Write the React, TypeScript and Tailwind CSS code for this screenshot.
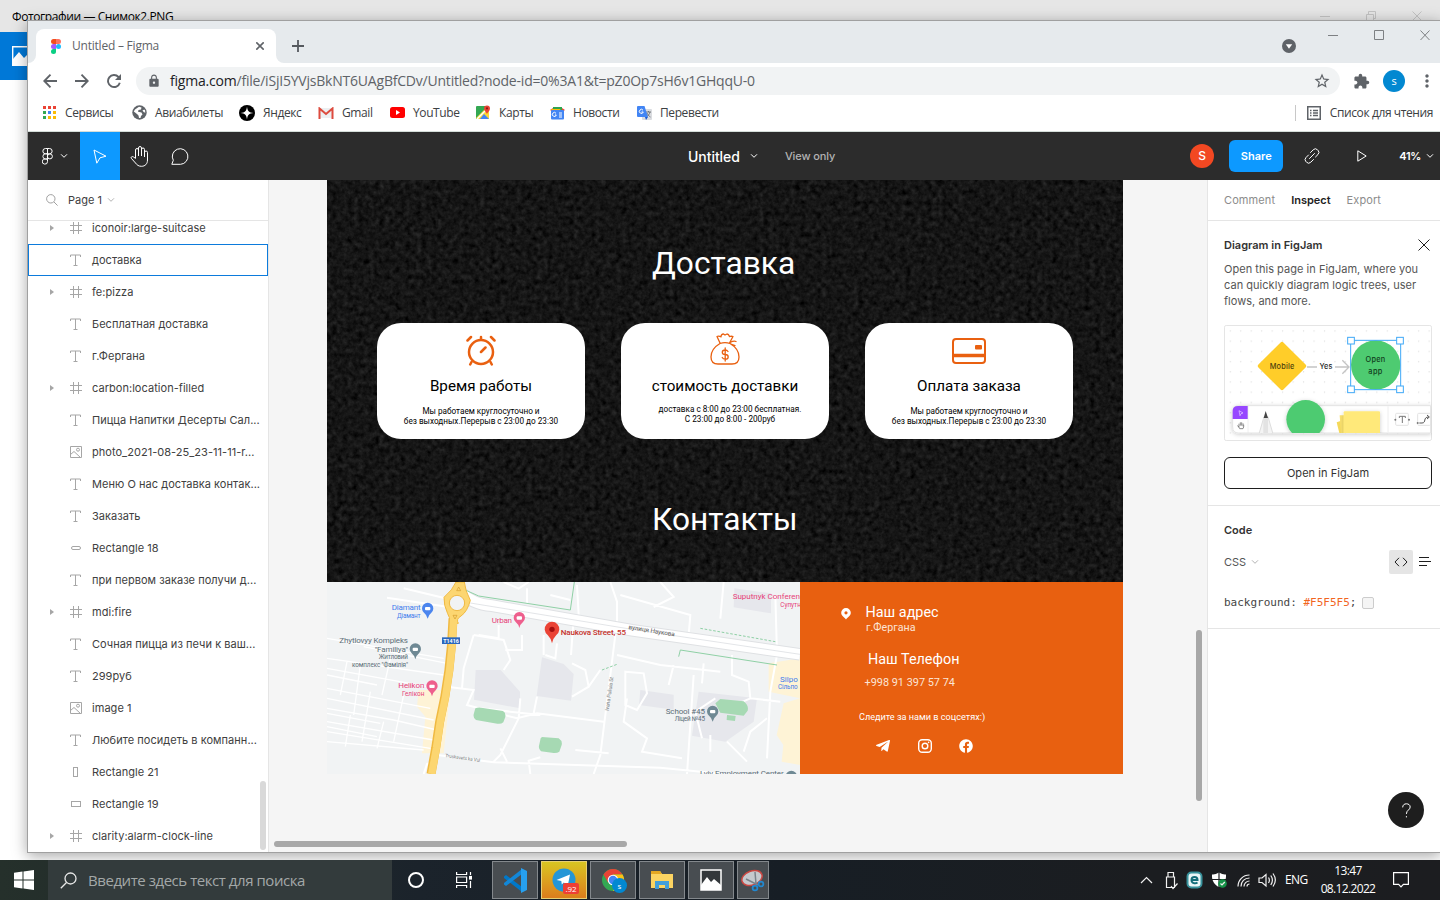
import React from "react";
import { MdLock, MdStarBorder, MdExtension, MdMoreVert } from "react-icons/md";
import { FaTelegramPlane, FaFacebook } from "react-icons/fa";

type Kind = "frame" | "text" | "image" | "pill" | "tall" | "rect";

const layers: { kind: Kind; name: string; selected?: boolean }[] = [
  { kind: "frame", name: "iconoir:large-suitcase" },
  { kind: "text", name: "доставка", selected: true },
  { kind: "frame", name: "fe:pizza" },
  { kind: "text", name: "Бесплатная доставка" },
  { kind: "text", name: "г.Фергана" },
  { kind: "frame", name: "carbon:location-filled" },
  { kind: "text", name: "Пицца Напитки Десерты Сал..." },
  { kind: "image", name: "photo_2021-08-25_23-11-11-r..." },
  { kind: "text", name: "Меню О нас доставка контак..." },
  { kind: "text", name: "Заказать" },
  { kind: "pill", name: "Rectangle 18" },
  { kind: "text", name: "при первом заказе получи д..." },
  { kind: "frame", name: "mdi:fire" },
  { kind: "text", name: "Сочная пицца из печи к ваш..." },
  { kind: "text", name: "299руб" },
  { kind: "image", name: "image 1" },
  { kind: "text", name: "Любите посидеть в компанн..." },
  { kind: "tall", name: "Rectangle 21" },
  { kind: "rect", name: "Rectangle 19" },
  { kind: "frame", name: "clarity:alarm-clock-line" },
];

function LayerIcon({ kind }: { kind: Kind }) {
  return (
    <svg width="12" height="12" viewBox="0 0 12 12" fill="none" stroke="#a6a6a6" className="shrink-0">
      {kind === "frame" && <path d="M3.500 0v12M8.500 0v12M0 3.500h12M0 8.500h12" />}
      {kind === "text" && <path d="M.5 3V1h10v2M5.500 1v10.500M3.500 11.500h4" />}
      {kind === "image" && (
        <>
          <path d="M.5.5h11v11H.5zM.5 8.500l3.500-3 6.500 6" />
          <circle cx="8" cy="3.700" r="1.500" />
        </>
      )}
      {kind === "pill" && <rect x="1.500" y="4.500" width="9" height="3" rx="1.500" />}
      {kind === "tall" && <rect x="3.500" y="1.500" width="4" height="9" />}
      {kind === "rect" && <rect x="1.500" y="3.500" width="9" height="5" />}
    </svg>
  );
}

function Chevron({ className }: { className: string }) {
  return (
    <svg width="8" height="6" viewBox="0 0 8 6" fill="none" stroke="currentColor" className={className}>
      <path d="M1 1.300l3 3 3-3" />
    </svg>
  );
}

function TabStrip() {
  return (
    <div className="flex h-[42px] shrink-0 bg-[#e6eaed]">
      <div className="flex w-2 items-end bg-white">
        <div className="h-full w-2 rounded-br-lg bg-[#e6eaed]" />
      </div>
      <div className="w-60 bg-[#e6eaed] pt-2">
        <div className="flex h-[34px] items-center rounded-t-lg bg-white pr-[12px] pl-[15px]">
          <svg width="10" height="15" viewBox="0 0 10 15">
            <path d="M2.500 0H5v5H2.500a2.500 2.500 0 010-5z" fill="#f24e1e" />
            <path d="M5 0h2.500a2.500 2.500 0 010 5H5z" fill="#ff7262" />
            <path d="M2.500 5H5v5H2.500a2.500 2.500 0 010-5z" fill="#a259ff" />
            <circle cx="7.500" cy="7.500" r="2.500" fill="#1abcfe" />
            <path d="M2.500 10H5v2.500A2.500 2.500 0 112.500 10z" fill="#0acf83" />
          </svg>
          <span className="ml-[11px] grow text-[12px] tracking-[-0.22px] text-[#5f6368]">Untitled – Figma</span>
          <svg width="8" height="8" viewBox="0 0 8 8" stroke="#5f6368" strokeWidth="1.600">
            <path d="M.3.300l7.400 7.400M7.700.300L.3 7.700" />
          </svg>
        </div>
      </div>
      <div className="flex w-2 bg-white">
        <div className="h-full w-2 rounded-bl-lg bg-[#e6eaed]" />
      </div>
      <div className="flex grow items-center pt-2 pl-[8px]">
        <svg width="12" height="12" viewBox="0 0 12 12" stroke="#55595e" strokeWidth="1.800">
          <path d="M6 0v12M0 6h12" />
        </svg>
      </div>
      <svg width="14" height="14" viewBox="0 0 14 14" className="mt-[18px] mr-[24px]">
        <circle cx="7" cy="7" r="7" fill="#5f6368" />
        <path d="M3.800 5.200h6.400L7 9.800z" fill="#fff" />
      </svg>
      <svg width="120" height="28" viewBox="0 0 120 28" fill="none" stroke="#7d8083">
        <path d="M8 14.500h10M54.500 9.500h9v9h-9zM100.500 9.500l9 9.500M109.500 9.500l-9 9.500" />
      </svg>
    </div>
  );
}

function AddressBar() {
  return (
    <div className="flex h-9 shrink-0 items-center bg-white pl-[15px] text-[#5f6368]">
      <svg width="14" height="14" viewBox="0 0 14 14" fill="none" stroke="currentColor" strokeWidth="1.900">
        <path d="M14 7H1.500M7.500.700L1.300 7l6.200 6.300" />
      </svg>
      <svg width="14" height="14" viewBox="0 0 14 14" fill="none" stroke="currentColor" strokeWidth="1.900" className="ml-[18px]">
        <path d="M0 7h12.500M6.500.700L12.700 7l-6.200 6.300" />
      </svg>
      <svg width="14" height="14" viewBox="0 0 14 14" fill="none" stroke="currentColor" strokeWidth="1.900" className="ml-[18px]">
        <path d="M12.800 8.700A6 6 0 1111.500 3L12.500 4.200" />
        <path d="M14 0v6H8z" fill="currentColor" stroke="none" />
      </svg>
      <div className="ml-[15px] flex h-7 w-[1204px] shrink-0 items-center rounded-full bg-[#f1f3f4] pr-[9px] pl-[11px]">
        <MdLock size={14} />
        <span className="ml-[9px] grow pb-px text-[14px] tracking-[-0.21px] whitespace-nowrap">
          <span className="text-[#202124]">figma.com</span>/file/iSjI5YVjsBkNT6UAgBfCDv/Untitled?node-id=0%3A1&amp;t=pZ0Op7sH6v1GHqqU-0
        </span>
        <MdStarBorder size={18} />
      </div>
      <MdExtension size={17} className="ml-[13px] shrink-0" />
      <div className="ml-[13px] flex size-[22px] shrink-0 items-center justify-center rounded-full bg-[#0288d1] text-[11px] text-white">s</div>
      <MdMoreVert size={20} className="ml-3 shrink-0" />
    </div>
  );
}

function Bookmark({ width, icon, label }: { width: string; icon: React.ReactNode; label: string }) {
  return (
    <div className={"flex shrink-0 items-center gap-2 whitespace-nowrap " + width}>
      <span className="flex w-4 shrink-0 justify-center">{icon}</span>
      <span>{label}</span>
    </div>
  );
}

function Bookmarks() {
  const dots = ["#ea4335", "#ea4335", "#ea4335", "#34a853", "#4285f4", "#fbbc04", "#34a853", "#fbbc04", "#fbbc04"];
  return (
    <div className="flex h-[33px] shrink-0 items-center border-b border-[#d4ddd9] bg-white pb-[5px] pl-[13px] text-[12px] tracking-[-0.4px] text-[#3c4043]">
      <Bookmark
        width="w-[90px]"
        label="Сервисы"
        icon={
          <svg width="13" height="13" viewBox="0 0 13 13">
            {dots.map((c, i) => (
              <rect key={i} x={(i % 3) * 5} y={Math.floor(i / 3) * 5} width="3" height="3" fill={c} />
            ))}
          </svg>
        }
      />
      <Bookmark
        width="w-[108px]"
        label="Авиабилеты"
        icon={
          <svg width="15" height="15" viewBox="0 0 15 15">
            <circle cx="7.500" cy="7.500" r="7.200" fill="#5f6368" />
            <path d="M7 1.800l2.500.8-.5 1.800-2.500.6-.5 1.700 3.500.8 1 2-1.500 1.500-.5 2H7l-.5-2.500L5 9 1.800 6.500 3 4.500zM10.500 5l2.500-.3.300 3-1.800-.7z" fill="#fff" />
          </svg>
        }
      />
      <Bookmark
        width="w-[79px]"
        label="Яндекс"
        icon={
          <svg width="16" height="16" viewBox="0 0 16 16">
            <circle cx="8" cy="8" r="8" />
            <path d="M8 1.500c.4 4.500 2 6.100 6.500 6.500-4.500.4-6.100 2-6.500 6.500-.4-4.500-2-6.100-6.500-6.500C6 7.600 7.600 6 8 1.500z" fill="#fff" />
          </svg>
        }
      />
      <Bookmark
        width="w-[71px]"
        label="Gmail"
        icon={
          <svg width="16" height="12" viewBox="0 0 16 12" fill="none">
            <path d="M1 1h14v10H1z" fill="#eceff1" />
            <path d="M1.500 12V1.500L8 7l6.500-5.500V12" stroke="#dd4b3e" strokeWidth="2" />
          </svg>
        }
      />
      <Bookmark
        width="w-[86px]"
        label="YouTube"
        icon={
          <svg width="15" height="11" viewBox="0 0 15 11" className="shrink-0">
            <rect width="15" height="11" rx="2.500" fill="red" />
            <path d="M6 3l4 2.500L6 8z" fill="#fff" />
          </svg>
        }
      />
      <Bookmark
        width="w-[74px]"
        label="Карты"
        icon={
          <svg width="16" height="15" viewBox="0 0 16 15">
            <rect x="1" y="1" width="13" height="13" rx="1" fill="#34a853" />
            <path d="M1 13L12 2l2 2v10H2z" fill="#fdd835" />
            <path d="M5 14l4-5 5 5z" fill="#4285f4" />
            <path d="M2 14L13 3" stroke="#fff" strokeWidth="1.500" />
            <path d="M12 9C11 6.500 9 6 9 3.500a3 3 0 016 0C15 6 13 6.500 12 9z" fill="#ea4335" />
            <circle cx="12" cy="3.400" r="1.100" fill="#8e1b12" />
          </svg>
        }
      />
      <Bookmark
        width="w-[87px]"
        label="Новости"
        icon={
          <svg width="15" height="14" viewBox="0 0 15 14">
            <path d="M0 4l3-2v4zM15 4l-3-2v4z" fill="#ea4335" />
            <path d="M3 1h9v4H3z" fill="#2ea44f" />
            <path d="M1 3h9l1 2H2z" fill="#fbbc04" />
            <rect x="1" y="4" width="13" height="9.500" rx="1" fill="#4285f4" />
            <path d="M6 7.300a2 2 0 10.300 1.700H5M9 7h3M9 9h3M9 11h3" fill="none" stroke="#fff" />
          </svg>
        }
      />
      <Bookmark
        width="grow"
        label="Перевести"
        icon={
          <svg width="15" height="14" viewBox="0 0 15 14">
            <rect x="5" y="3" width="10" height="11" rx="1" fill="#dadce0" />
            <path d="M9 6h5M11.500 5v1M13 6c-.5 2-2 4-3.500 5M10 7c.8 2 2 3 3.500 4" stroke="#5f6368" fill="none" strokeWidth=".8" />
            <path d="M1 0h6.500L11 11H1a1 1 0 01-1-1V1a1 1 0 011-1z" fill="#4285f4" />
            <path d="M8 11h3l-2 3z" fill="#1a5ad0" />
            <path d="M6 4.200a2 2 0 10.300 1.800H4.500" fill="none" stroke="#fff" />
          </svg>
        }
      />
      <div className="mr-[11px] h-4 w-px bg-[#c8c8c8]" />
      <svg width="14" height="14" viewBox="0 0 14 14" fill="none" stroke="#5f6368">
        <rect x=".75" y=".75" width="12.500" height="12.500" strokeWidth="1.500" />
        <path d="M3 4.500h1.500M6 4.500h5M3 7h1.500M6 7h5M3 9.500h1.500M6 9.500h5" strokeWidth="1.300" />
      </svg>
      <span className="mr-[7px] ml-[9px] whitespace-nowrap">Список для чтения</span>
    </div>
  );
}

function FigmaToolbar() {
  return (
    <div className="flex h-12 shrink-0 items-center bg-[#2c2c2c] font-['Inter',sans-serif] text-white">
      <div className="flex w-[52px] items-center pl-[14px]">
        <svg width="11" height="17" viewBox="0 0 11 17" fill="none" stroke="#fff">
          <path d="M5.500.5h-2a2.600 2.600 0 000 5.300h2zM5.500.5h2a2.600 2.600 0 010 5.300h-2zM5.500 5.800h-2a2.600 2.600 0 000 5.200h2zM5.500 11h-2a2.600 2.600 0 102 2.600z" />
          <circle cx="7.900" cy="8.400" r="2.500" />
        </svg>
        <Chevron className="ml-[7px] text-white" />
      </div>
      <div className="flex h-12 w-10 items-center justify-center bg-[#0d99ff]">
        <svg width="14" height="15" viewBox="0 0 14 15" fill="none" stroke="#fff" strokeLinejoin="round">
          <path d="M1 1l12 6.200-6 1.600-3.200 5.400z" />
        </svg>
      </div>
      <div className="flex w-[39px] items-center justify-center">
        <svg width="19" height="21" viewBox="0 0 19 21" fill="none" stroke="#fff" strokeLinecap="round" strokeLinejoin="round">
          <path d="M5.500 12V4a1.500 1.500 0 013 0v6V2a1.500 1.500 0 013 0v8-6.500a1.500 1.500 0 013 0V11 6.500a1.500 1.500 0 013 0V14c0 4-2.500 6.300-6 6.300-3 0-4.500-1.300-6-3.300l-4.200-4.700c-.8-1 .8-2.500 2-1.500z" />
        </svg>
      </div>
      <div className="flex w-[41px] items-center justify-center">
        <svg width="18" height="17" viewBox="0 0 18 17" fill="none" stroke="#fff" strokeLinejoin="round">
          <path d="M.8 16.300l1.500-4A7.800 7.800 0 119.500 16.300z" />
        </svg>
      </div>
      <div className="flex grow items-center pl-[488px]">
        <span className="text-[14px] font-medium tracking-[-0.05px]">Untitled</span>
        <Chevron className="ml-[10px] text-white" />
        <span className="ml-[27px] text-[11px] font-medium tracking-[-0.1px] text-[#b3b3b3]">View only</span>
      </div>
      <div className="flex size-6 items-center justify-center rounded-full bg-[#f24822] text-[12px] font-medium">S</div>
      <div className="ml-[15px] flex h-8 w-[54px] items-center justify-center rounded-md bg-[#0d99ff] text-[11px] font-semibold">Share</div>
      <svg width="16" height="16" viewBox="0 0 16 16" fill="none" stroke="#fff" strokeLinecap="round" className="ml-[21px]">
        <path d="M6.500 4.500l2.700-2.700a3 3 0 014.300 0l.5.500a3 3 0 010 4.200L11.500 9M9.500 11.500l-2.700 2.700a3 3 0 01-4.300 0L2 13.700a3 3 0 010-4.200L4.500 7M5.500 10.500l5-5" />
      </svg>
      <svg width="10" height="12" viewBox="0 0 10 12" fill="none" stroke="#fff" strokeLinejoin="round" className="ml-[37px]">
        <path d="M.8.800l8.400 5.200-8.400 5.200z" />
      </svg>
      <span className="ml-[32px] text-[11px] font-semibold tracking-[-0.3px]">41%</span>
      <Chevron className="mr-[6px] ml-[5px] text-white" />
    </div>
  );
}

function LayersPanel() {
  return (
    <div className="relative flex w-[241px] shrink-0 flex-col border-r border-[#e5e5e5] bg-white font-['Inter',sans-serif] text-[11px] text-[#404040]">
      <div className="flex h-[41px] shrink-0 items-center border-b border-[#e5e5e5] pl-[18px]">
        <svg width="12" height="12" viewBox="0 0 12 12" fill="none" stroke="#a0a0a0">
          <circle cx="4.800" cy="4.800" r="4.200" />
          <path d="M8 8l3.600 3.600" />
        </svg>
        <span className="ml-[10px]">Page 1</span>
        <Chevron className="ml-[5px] text-[#b3b3b3]" />
      </div>
      <div className="grow overflow-hidden">
        <div className="-mt-[9px]">
          {layers.map((l) => (
            <div
              key={l.name}
              className={"flex h-8 items-center " + (l.selected ? "shadow-[inset_0_0_0_1px_#0c7bdc]" : "")}
            >
              <span className="flex w-[42px] pl-[22px]">
                {l.kind === "frame" && (
                  <svg width="4" height="6" viewBox="0 0 4 6">
                    <path d="M0 0l4 3-4 3z" fill="#a6a6a6" />
                  </svg>
                )}
              </span>
              <LayerIcon kind={l.kind} />
              <span className="ml-[10px] tracking-[0.04px] whitespace-nowrap">{l.name}</span>
            </div>
          ))}
        </div>
      </div>
      <div className="absolute right-[2px] bottom-[2px] h-[69px] w-[6px] rounded-full bg-[#d9d9d9]" />
    </div>
  );
}

function InfoCard({ icon, title, lines, textClass }: { icon: React.ReactNode; title: string; lines: string[]; textClass: string }) {
  return (
    <div className="flex h-[116px] w-[208px] flex-col items-center rounded-[24px] bg-white text-black">
      <div className="flex h-[53px] items-end justify-center pb-[10px]">{icon}</div>
      <div className="h-5 text-[15.200px] leading-5">{title}</div>
      <div className={"text-center text-[8.200px] leading-[9.600px] " + textClass}>
        {lines.map((l) => (
          <div key={l}>{l}</div>
        ))}
      </div>
    </div>
  );
}

function MapView() {
  return (
    <svg width="473" height="192" viewBox="0 21 1419 576" fill="none" className="shrink-0 font-['Roboto',sans-serif]">
      <rect y="21" width="1419" height="576" fill="#f1f3f4" />
      <g fill="#e6e7ec">
        <path d="M446 285h75l58 65v50l-138-26zM645 247l65 20 30 30-8 80-103-14zM1222 40l110 15v60l-112-18zM1115 350l175 20-10 70-85 60-100-18zM940 345l100 14v45l-104-14z" />
      </g>
      <g fill="#fef3d6">
        <path d="M275 345h95l-20 190h-65l10-110-25-30zM1325 265l94-15v120l-94-20zM1370 385l49-15v200l-55-10 5-50-20-30z" />
      </g>
      <g stroke="#fff" strokeWidth="6">
        <path d="M0 190l350 60M0 250l350 50M0 280l330 60M0 340l310 60M0 370l320 65M0 400l200 35 130 30M0 440l320 55M0 470l310 50M0 500l290 25M0 300l150 30M0 415l160 30M0 455l150 30M110 215l250 50M60 260l-20 100M100 270l-20 150M190 250l-25 110M130 350l-25 150M230 360l-30 140M70 420l-15 95M170 440l-20 80" strokeWidth="4" />
        <path d="M180 68l240 36M230 40l125 30M330 540l170 22 500 16 190 19M290 597l10-30 25-10M360 335l80 10-20 45 150 40 60-15 200 25M580 370l-5 60-55 110-20 20M520 520l20 40M440 180l-30 100-5 60M440 180l90 15 20 60-20 30M515 150v40l-60-10M585 180v45l-50 0M630 365l-10 50M650 240v-60M690 205l-5 45-30-10M735 265l40 20 10 50-50 30M785 335l35-50M530 21l45 20 30-20M600 40v45M670 60l60 15M740 130l-8 110M750 30l5 90 30 20M870 140l-15 120-35 280-20 57M870 240l130 30 180 20M870 140v-60l-20-59M880 60l210 60-5 60M1000 21l40 45-60 30M1190 21l-10 110M1345 60l5 180-20 110-10 200M1100 300l-20 297M1215 240v60l50 20 5 50-70 30M895 290l55 5 10 60-30 50-35-15zM900 370l-10 70 70 50-15 40 120 20M1165 370l-60 40 20 80M1270 370l90 10M1320 430l-50 40-20 60M745 525l100 10M610 597l-5-40 35-10M1040 270l-15 60M1130 265l-5 60M1150 480v50M1200 500l60 60M460 400l180 20" />
      </g>
      <path d="M400 50q35 38 95 42l420 74 504 72" stroke="#dfe1e4" strokeWidth="38" />
      <path d="M400 50q35 38 95 42l420 74 504 72" stroke="#fff" strokeWidth="32" />
      <path d="M430 84l485 79 504 75" stroke="#d5d8dc" strokeWidth="2" />
      <g stroke="#8fd0a5" strokeWidth="3">
        <path d="M415 45l40 18 275 42 12-84M1055 245l5-20 290 45" />
        <path d="M1120 160l225 40M825 285l45-17" strokeDasharray="8 5" />
      </g>
      <path d="M1165 385l15-13 70 7q16 12 12 28l-12 15-70-9zM1200 420l26 3-2 15-25-3zM445 400q8-4 18-2l65 10q9 4 7 18l-6 16q-7 6-18 4l-64-11q-9-5-7-17zM645 486l50 4q12 8 9 20l-7 20q-7 5-17 4l-38-5q-8-7-6-17l5-22z" fill="#a6d9b3" />
      <path d="M378 130q-5 160-40 310l-12 80-14 77" stroke="#f0b941" strokeWidth="27" />
      <path d="M387 21h25q2 25 18 55-9 34-28 47-16 9-8 22h-25q0-20-7-29-12-25-11-49 26-22 36-46z" fill="#fcd671" stroke="#f0b941" strokeWidth="3" />
      <path d="M380 130q-5 160-40 310l-12 80-14 77" stroke="#fcd671" strokeWidth="22" />
      <circle cx="390" cy="84" r="23" fill="#f1f3f4" stroke="#f0b941" strokeWidth="3" />
      <path d="M389 47l6-11 6 11zM378 121l6 11 6-11z" stroke="#d39b2c" strokeWidth="2" />
      <rect x="345" y="187" width="54" height="20" fill="#2b67bd" />
      <text x="372" y="203" fontSize="16" fontWeight="700" fill="#fff" textAnchor="middle">T1416</text>
      {[
        { x: 302, y: 102, c: "#4b85ee" },
        { x: 577, y: 130, c: "#ee5f8d" },
        { x: 265, y: 224, c: "#6f8994" },
        { x: 315, y: 335, c: "#ee5f8d" },
        { x: 1157, y: 411, c: "#6f8994" },
        { x: 1393, y: 606, c: "#6f8994" },
      ].map((p) => (
        <g key={p.x}>
          <path d={`M${p.x} ${p.y + 29}q-3-12-11-18a17 17 0 1122 0q-8 6-11 18z`} fill={p.c} />
          <rect x={p.x - 8} y={p.y - 6} width="16" height="10" rx="3" fill="#fff" />
        </g>
      ))}
      <path d="M675 205q-2-14-13-25a22 22 0 1126 0q-11 11-13 25z" fill="#ea4335" />
      <circle cx="675" cy="163" r="8" fill="#a50e0e" />
      <g fontSize="24" fontWeight="400" stroke="none">
        <text x="194" y="106" fill="#3f7cec" textLength="87">Diamant</text>
        <text x="210" y="129" fill="#3f7cec" fontSize="19" textLength="71">Діамант</text>
        <text x="494" y="143" fill="#e63f78" textLength="61">Urban</text>
        <text x="701" y="181" fill="#c5312b" fontWeight="500" textLength="196">Naukova Street, 55</text>
        <text x="1217" y="73" fill="#e63f78">Suputnyk Conference</text>
        <text x="1360" y="96" fill="#e63f78" fontSize="19">Супутник</text>
        <g fill="#5b6d77">
          <text x="37" y="204" textLength="206">Zhytlovyy Kompleks</text>
          <text x="143" y="231" textLength="100">"Familiya"</text>
          <text x="155" y="252" fontSize="19" textLength="88">Житловий</text>
          <text x="75" y="275" fontSize="19" textLength="168">комплекс "Фамілія"</text>
          <text x="1016" y="417" textLength="118">School #45</text>
          <text x="1043" y="439" fontSize="19" textLength="91">Ліцей №45</text>
          <text x="1119" y="602" textLength="251">Lviv Employment Center</text>
        </g>
        <text x="214" y="340" fill="#e63f78" textLength="78">Helikon</text>
        <text x="225" y="362" fill="#e63f78" fontSize="19" textLength="67">Гелікон</text>
        <text x="1359" y="320" fill="#3f7cec">Silpo</text>
        <text x="1353" y="341" fill="#3f7cec" fontSize="19" textLength="59">Сільпо</text>
        <text x="0" y="0" fill="#555" fontSize="19" textLength="140" transform="translate(904 162) rotate(9)">вулиця Наукова</text>
        <text x="0" y="0" fill="#7a7d80" fontSize="16" textLength="102" transform="translate(845 408) rotate(-82)">Ivana Puliuia St</text>
        <text x="0" y="0" fill="#7a7d80" fontSize="14" textLength="106" transform="translate(354 546) rotate(8)">Truskavets ka Vul</text>
      </g>
    </svg>
  );
}

function Artboard() {
  const hours = ["Мы работаем круглосуточно и", "без выходных.Перерыв с 23:00 до 23:30"];
  return (
    <div className="w-[796px] font-['Roboto',sans-serif]">
      <div className="relative h-[402px] overflow-hidden bg-[#141414]">
        <svg width="796" height="402" className="absolute inset-0">
          <filter id="grain" x="0" y="0" width="100%" height="100%" colorInterpolationFilters="sRGB">
            <feTurbulence type="fractalNoise" baseFrequency="0.19" numOctaves="3" seed="7" />
            <feColorMatrix values="0.14 0.14 0 0 -0.057  0.14 0.14 0 0 -0.057  0.14 0.14 0 0 -0.057  0 0 0 0 1" />
          </filter>
          <rect width="796" height="402" filter="url(#grain)" />
        </svg>
        <div className="relative flex flex-col text-white">
          <div className="mt-[64px] pl-[325px] text-[31.700px] leading-10">Доставка</div>
          <div className="mt-[39px] flex gap-9 pl-[50px]">
            <InfoCard
              title="Время работы"
              lines={hours}
              textClass="mt-[11px]"
              icon={
                <svg width="30" height="31" viewBox="0 0 30 31" fill="none" stroke="#e96010" strokeWidth="2.500" strokeLinecap="round">
                  <circle cx="15" cy="17" r="12" />
                  <path d="M15 17l4.500-4.500M15 2v2.500M1.500 5.500L5 2M28.500 5.500L25 2M5.500 27l-1.300 2.500M24.500 27l1.300 2.500" />
                </svg>
              }
            />
            <InfoCard
              title="стоимость доставки"
              lines={["доставка с 8:00 до 23:00 бесплатная.", "С 23:00 до 8:00 - 200руб"]}
              textClass="mt-[9px] pl-[10px]"
              icon={
                <svg width="30" height="33" viewBox="0 0 30 33" fill="none" stroke="#e96010" strokeWidth="1.300" strokeLinecap="round" strokeLinejoin="round" className="mb-px">
                  <path d="M10 11.500C4 15 1 20 1 25c0 5 3 7 7 7h14c4 0 7-2 7-7 0-5-3-10-9-13.500-3-1-7-1-10 0zM10 11L7 4.500c1.500-.8 2.500 0 4 .3C11 3 12 2 13.500 2l1.500 1 2-1c1.500 0 2 1 2.500 2.500 1.500-.2 2-.5 3.500 0L19.500 11M20 10.500c3-1.500 4-2 6-1M21 12l4 1.500" />
                  <path d="M18 19.500c-.6-1-1.500-1.500-2.800-1.500-3.900 0-3.900 4.300 0 4.500 4 .2 4 4.700 0 4.700-1.400 0-2.400-.6-3-1.700M15.200 16v13" />
                </svg>
              }
            />
            <InfoCard
              title="Оплата заказа"
              lines={hours}
              textClass="mt-[11px]"
              icon={
                <svg width="34" height="28" viewBox="0 0 34 28" fill="none" stroke="#e96010" strokeWidth="2">
                  <rect x="1" y="1" width="32" height="24" rx="3" />
                  <path d="M1 17.500h32" strokeWidth="3.500" />
                  <rect x="23" y="7" width="7" height="4.500" rx="1" fill="#e96010" stroke="none" />
                </svg>
              }
            />
          </div>
          <div className="mt-[61px] pl-[325px] text-[31.700px] leading-10">Контакты</div>
        </div>
      </div>
      <div className="flex h-48">
        <MapView />
        <div className="flex w-[323px] flex-col bg-[#e86010] text-white">
          <div className="mt-5 flex h-5 items-center pl-[41px]">
            <svg width="10" height="12" viewBox="0 0 10 12" className="mt-1">
              <path d="M5 0a4.800 4.800 0 00-4.800 4.800C.2 8 3 9 5 11.500 7 9 9.800 8 9.800 4.800A4.800 4.800 0 005 0zm0 3.200a1.600 1.600 0 110 3.200 1.600 1.600 0 010-3.200z" fill="#fff" />
            </svg>
            <span className="ml-[14.500px] pt-px text-[14.400px] leading-5">Наш адрес</span>
          </div>
          <div className="h-3 pl-[66px] text-[10.700px] leading-3 text-[#fbe4d6]">г.Фергана</div>
          <div className="mt-[16px] pl-[68px] text-[14.400px] leading-5">Наш Телефон</div>
          <div className="mt-[5px] pl-[64.500px] text-[10.900px] leading-4 text-[#fbe4d6]">+998 91 397 57 74</div>
          <div className="mt-[20px] pl-[59px] text-[9.150px] leading-3">Следите за нами в соцсетях:)</div>
          <div className="mt-[15px] flex items-center pl-[75px]">
            <FaTelegramPlane size={16} />
            <svg width="14" height="14" viewBox="0 0 14 14" fill="none" stroke="#fff" strokeWidth="1.400" className="ml-[27px]">
              <rect x=".7" y=".7" width="12.600" height="12.600" rx="3.500" />
              <circle cx="7" cy="7" r="2.800" />
              <circle cx="10.600" cy="3.400" r=".8" fill="#fff" stroke="none" />
            </svg>
            <FaFacebook size={14} className="ml-[27px]" />
          </div>
        </div>
      </div>
    </div>
  );
}

function Canvas() {
  return (
    <div className="relative w-[938px] shrink-0 bg-[#f5f5f5] pl-[58px]">
      <Artboard />
      <div className="absolute top-[450px] right-[5px] h-[171px] w-[6px] rounded-full bg-[#a8a8a8]" />
      <div className="absolute bottom-[5px] left-[5px] h-[6px] w-[353px] rounded-full bg-[#a8a8a8]" />
    </div>
  );
}

function FigJamPreview() {
  return (
    <svg width="208" height="116" viewBox="72 435 624 348" fill="none" className="mt-4 font-['Inter',sans-serif]">
      <defs>
        <pattern id="dots" x="75" y="437" width="31.400" height="30.600" patternUnits="userSpaceOnUse">
          <circle cx="16" cy="16" r="2" fill="#dedede" />
        </pattern>
        <clipPath id="tray">
          <rect x="75" y="440" width="617" height="319" />
        </clipPath>
        <filter id="soft" x="-20%" y="-20%" width="140%" height="140%">
          <feDropShadow dx="0" dy="3" stdDeviation="6" floodOpacity=".2" />
        </filter>
      </defs>
      <rect x="73.500" y="436.500" width="621" height="345" rx="5" fill="#fff" stroke="#e5e5e5" strokeWidth="3" />
      <rect x="75" y="438" width="618" height="342" fill="url(#dots)" />
      <rect x="193" y="505" width="106" height="106" rx="6" transform="rotate(45 246 558)" fill="#ffcd29" />
      <path d="M321 561h30M405 561h42M427 541l20 20-20 20" stroke="#c4c4c4" strokeWidth="4" />
      <circle cx="527" cy="555" r="74" fill="#4ecb71" />
      <rect x="452" y="481" width="150" height="148" stroke="#3fa8f7" strokeWidth="3" />
      {[[443, 472], [590, 472], [443, 618], [590, 618]].map(([x, y]) => (
        <rect key={`${x}-${y}`} x={x} y={y} width="20" height="20" fill="#fff" stroke="#3fa8f7" strokeWidth="3" />
      ))}
      <g fontSize="22" fontWeight="500" fill="#1e1e1e" textAnchor="middle">
        <text x="246" y="566" textLength="74" fill="#4d3e0c">Mobile</text>
        <text x="378" y="566" textLength="39">Yes</text>
        <text x="526" y="546" textLength="59" fill="#103d1c">Open</text>
        <text x="526" y="581" textLength="42" fill="#103d1c">app</text>
      </g>
      <path d="M98 695q0-18 18-18h576v82H116q-18 0-18-18z" fill="#fff" stroke="#e3e3e3" strokeWidth="3" filter="url(#soft)" />
      <g clipPath="url(#tray)">
        <path d="M98 717v-24q0-15 16-15h30v39z" fill="#9747ff" />
        <path d="M117 692l12 7-6 2-3 6z" stroke="#fff" strokeWidth="1.500" />
        <path d="M144 677v82" stroke="#e8e8e8" strokeWidth="2" />
        <path d="M116 742l-3-6M117 740v-9M121 737v-10M125 737v-10M129 739v-9M115 738l4 8h10q3-4 2-12" stroke="#777" strokeWidth="2.500" />
        <path d="M177 762l15-52h12l15 52z" fill="#f4f4f4" stroke="#ddd" strokeWidth="3" />
        <path d="M190 762v-48h14v48z" fill="#e3e3e3" />
        <path d="M191 714l6-21 7 21z" fill="#444" />
        <circle cx="317" cy="718" r="58" fill="#4ecb71" filter="url(#soft)" />
        <path d="M410 727l30-10 20 50h-40z" fill="#f5d95a" />
        <path d="M419 706h40v60h-36z" fill="#fbe26f" />
        <rect x="431" y="694" width="109" height="80" rx="3" fill="#ffe97a" filter="url(#soft)" />
        <path d="M564 679v78" stroke="#eee" strokeWidth="3" />
        <rect x="587" y="700" width="38" height="36" rx="3" stroke="#e2e2e2" strokeWidth="3" />
        <path d="M598 714v-5h18v5M607 709v20" stroke="#777" strokeWidth="3" />
        <circle cx="586" cy="719" r="3" fill="#777" />
        <circle cx="627" cy="719" r="3" fill="#777" />
        <rect x="653" y="700" width="39" height="36" rx="3" stroke="#e2e2e2" strokeWidth="3" />
        <path d="M658 729h8c14 0 2-18 20-18M681 705l7 6-7 6" stroke="#555" strokeWidth="3" />
        <circle cx="653" cy="729" r="3" fill="#777" />
      </g>
    </svg>
  );
}

function InspectPanel() {
  return (
    <div className="relative flex w-[233px] shrink-0 flex-col border-l border-[#e5e5e5] bg-white font-['Inter',sans-serif] text-[11px] text-[#333]">
      <div className="flex h-[41px] items-center gap-4 border-b border-[#e5e5e5] pl-4 text-[#8c8c8c]">
        <span className="tracking-[0.1px]">Comment</span>
        <span className="font-semibold text-[#1e1e1e]">Inspect</span>
        <span className="tracking-[0.1px]">Export</span>
      </div>
      <div className="h-[285px] border-b border-[#e5e5e5] pt-4 pl-4">
        <div className="flex h-4 w-[208px] items-center justify-between pr-[2px] font-semibold">
          Diagram in FigJam
          <svg width="12" height="12" viewBox="0 0 12 12" stroke="#1e1e1e" strokeWidth="1">
            <path d="M.5.5l11 11M11.500.5l-11 11" />
          </svg>
        </div>
        <p className="mt-2 leading-4 tracking-[0.03px] whitespace-nowrap text-[#555]">
          Open this page in FigJam, where you
          <br />
          can quickly diagram logic trees, user
          <br />
          flows, and more.
        </p>
        <FigJamPreview />
        <div className="mt-4 flex h-8 w-[208px] items-center justify-center rounded-md border border-[#1e1e1e] tracking-[0.06px]">Open in FigJam</div>
      </div>
      <div className="h-[123px] border-b border-[#e5e5e5] pt-4 pl-4">
        <div className="h-4 font-semibold leading-4">Code</div>
        <div className="mt-[12px] flex h-6 items-center text-[#555]">
          CSS
          <Chevron className="mr-auto ml-[5px] text-[#b3b3b3]" />
          <div className="flex size-6 items-center justify-center rounded-[2px] bg-[#e5e5e5]">
            <svg width="14" height="10" viewBox="0 0 14 10" fill="none" stroke="#1e1e1e">
              <path d="M5 .8L1 5l4 4.200M9 .8L13 5 9 9.200" />
            </svg>
          </div>
          <svg width="12" height="10" viewBox="0 0 12 10" stroke="#1e1e1e" className="mr-[9px] ml-[6px]">
            <path d="M0 .5h10M0 4.500h12M0 8.500h8" />
          </svg>
        </div>
        <div className="mt-[21px] flex h-4 items-center font-['DejaVu_Sans_Mono','Liberation_Mono',monospace] text-[11px] whitespace-pre text-[#444]">
          background: <span className="text-[#f2661f]">#F5F5F5</span>;
          <span className="ml-[6px] size-3 rounded-[2px] border border-[#ccc] bg-[#f5f5f5]" />
        </div>
      </div>
      <div className="absolute right-[16px] bottom-[24px] flex size-9 items-center justify-center rounded-full bg-[#1e1e1e]">
        <svg width="9" height="15" viewBox="0 0 9 15" fill="none" stroke="#fff" strokeLinecap="round">
          <path d="M.7 4C.7 2 2.300.8 4.400.8S8.200 2 8.200 4c0 3-3.800 3-3.800 6.500M4.400 13.500v.5" />
        </svg>
      </div>
    </div>
  );
}

function TaskButton({ className, children }: { className: string; children: React.ReactNode }) {
  return <div className={"mr-[3px] flex h-[38px] shrink-0 items-center justify-center border " + className}>{children}</div>;
}

function Taskbar() {
  const gray = "w-[46px] border-[#83888c] bg-[#484d51]";
  return (
    <div className="absolute bottom-0 left-0 flex h-10 w-full items-center bg-[linear-gradient(90deg,#25302b_0,#1b232b_420px,#171e25_780px,#1b1d20_1150px,#1c1d20_100%)] font-['Open_Sans','Noto_Sans',sans-serif] text-white">
      <div className="flex w-12 shrink-0 justify-center">
        <svg width="20" height="20" viewBox="0 0 20 20" fill="#fff">
          <path d="M0 2.800l8.500-1.200v8H0zM9.500 1.400L20 0v9.500H9.500zM0 10.500h8.500v8L0 17.300zM9.500 10.500H20V20L9.500 18.600z" />
        </svg>
      </div>
      <div className="flex h-10 w-[344px] shrink-0 items-center bg-[#333b3c] pl-3">
        <svg width="17" height="17" viewBox="0 0 17 17" fill="none" stroke="#e8e8e8" strokeWidth="1.300">
          <circle cx="10.500" cy="6.500" r="5.500" />
          <path d="M6.500 10.500L.8 16.200" />
        </svg>
        <span className="ml-[11px] text-[15px] tracking-[-0.45px] whitespace-nowrap text-[#a3a8a8]">Введите здесь текст для поиска</span>
      </div>
      <div className="flex w-12 shrink-0 justify-center">
        <div className="size-4 rounded-full border-2 border-white" />
      </div>
      <div className="flex w-[52px] shrink-0 pl-4">
        <svg width="16" height="16" viewBox="0 0 16 16" fill="none" stroke="#fff" strokeWidth="1.200">
          <path d="M.6 0v2.500h10V0M.6 5h10v5.500H.6zM.6 16v-2.500h10V16M14.500 0v3M14.500 9v7" />
          <rect x="13.600" y="4.500" width="2" height="2.500" fill="#fff" />
        </svg>
      </div>
      <TaskButton className={gray}>
        <svg width="25" height="25" viewBox="0 0 25 25">
          <path d="M1 8.500l2-1.500L19 19v5L1 10z" fill="#0078c9" />
          <path d="M1 16.500L3 18 19 6V1L1 15z" fill="#1287d8" />
          <path d="M18 0l6 3v19l-6 3z" fill="#27a0ef" />
        </svg>
      </TaskButton>
      <TaskButton className="relative w-[46px] border-[#e7cf72] bg-linear-to-b from-[#d7c522] to-[#dc7d1c]">
        <svg width="24" height="24" viewBox="0 0 24 24">
          <circle cx="12" cy="12" r="11.500" fill="#2496d6" />
          <path d="M4.500 12L18 6.500l-2.200 11-4-3-2 2-.5-3.500z" fill="#fff" />
        </svg>
        <span className="absolute right-[7px] bottom-[4px] flex h-[11px] w-4 items-center justify-center rounded-[2px] bg-[#ee3f35] text-[8px] leading-none">.92</span>
      </TaskButton>
      <TaskButton className={"relative " + gray}>
        <svg width="24" height="24" viewBox="0 0 24 24">
          <circle cx="12" cy="12" r="11" fill="#33a853" />
          <path d="M2.500 6.500A11 11 0 0121.500 6.500H12L7 14.500z" fill="#e84335" />
          <path d="M12 6.500h9.600A11 11 0 0112 23l5-8.500z" fill="#fbc116" />
          <circle cx="12" cy="12" r="5.300" fill="#fff" />
          <circle cx="12" cy="12" r="4.200" fill="#4285f4" />
        </svg>
        <span className="absolute right-[8px] bottom-[5px] flex size-[15px] items-center justify-center rounded-full bg-[#0288d1] text-[8px] leading-none">s</span>
      </TaskButton>
      <TaskButton className={gray}>
        <svg width="22" height="20" viewBox="0 0 22 20">
          <path d="M0 1h9l2 3h11v14H0z" fill="#fcd462" />
          <path d="M0 1h9l2 3H0z" fill="#e5a823" />
          <path d="M4 19v-8h14v8h-4v-4H8v4z" fill="#429fdb" />
        </svg>
      </TaskButton>
      <TaskButton className={gray}>
        <svg width="22" height="22" viewBox="0 0 22 22">
          <path d="M1 1h20v20H1z" fill="#33383b" stroke="#fff" strokeWidth="1.500" />
          <path d="M1 16l6-8 4 5 3-3 7 6v5H1z" fill="#fff" />
        </svg>
      </TaskButton>
      <TaskButton className="w-8 border-[#83888c] bg-[#484d51]">
        <svg width="24" height="24" viewBox="0 0 24 24" fill="none">
          <ellipse cx="11" cy="10" rx="10.500" ry="7" transform="rotate(-20 11 10)" fill="#c5c9ce" stroke="#ca4742" strokeWidth="1.500" />
          <path d="M5 11l12 6M14 4l1 12" stroke="#7a828a" strokeWidth="1.500" />
          <circle cx="14" cy="20" r="2.400" stroke="#2288d0" strokeWidth="1.800" />
          <circle cx="20" cy="16" r="2.400" stroke="#2288d0" strokeWidth="1.800" />
        </svg>
      </TaskButton>
      <div className="grow" />
      <svg width="152" height="24" viewBox="0 0 152 24" fill="none" stroke="#f1f1f1" strokeWidth="1.200" className="shrink-0">
        <path d="M9 15l5.500-5.500L20 15" />
        <path d="M36 9V4.500h5.500V9M34.500 9h8v10.500h-8zM39 18l2 2.500 4.500-5" />
        <rect x="55.500" y="4.500" width="14" height="15" rx="4" fill="#e9f6f7" stroke="#38929c" strokeWidth="2" />
        <path d="M59.500 12h6c0-4-6-4-6 0 0 3.500 4 4 6 2.500" stroke="#136d79" strokeWidth="2" />
        <path d="M87 4.500q4 2.500 7 2c.5 6-2.500 10.500-7 12.500-4.500-2-7.500-6.500-7-12.500q3 .5 7-2z" fill="#fff" stroke="none" />
        <path d="M87 4v15M80 11.500h14" stroke="#1b1d20" />
        <circle cx="90.500" cy="15.500" r="4.300" fill="#169348" stroke="none" />
        <path d="M88.500 15.500l1.500 1.500 2.800-3" />
        <path d="M106 18.500C106 12 111 7 117.500 7M109 18.500c0-5 3.500-8.500 8.500-8.500M112 18.500c0-3 2.500-5.500 5.500-5.500M115 18.500c0-1.500 1-2.500 2.500-2.500" />
        <path d="M127 10h3l4-3.500v11.500l-4-3.500h-3zM136.500 9.500q1.800 2.700 0 5.500M138.800 7.500q3.200 4.700 0 9.500M141 5.500q4.700 6.500 0 13" />
      </svg>
      <span className="ml-[1px] w-[24px] text-[12px] tracking-[-0.6px]">ENG</span>
      <div className="ml-[11px] flex w-[56px] flex-col items-center text-[12px] leading-[18px] tracking-[-0.65px]">
        <span>13:47</span>
        <span>08.12.2022</span>
      </div>
      <svg width="16" height="16" viewBox="0 0 16 16" fill="none" stroke="#fff" strokeWidth="1.200" className="mr-[31px] ml-[17px]">
        <path d="M.6.600h14.800v11.800h-5L8 14.800l-2.400-2.400h-5z" />
      </svg>
    </div>
  );
}

export default function App() {
  return (
    <div className="relative h-[900px] w-[1440px] overflow-hidden bg-white font-['Open_Sans','Noto_Sans',sans-serif]">
      <div className="flex h-8 items-start justify-between bg-[#e6e6e6] pt-[8px] pl-3 text-[12px] leading-[17px] tracking-[-0.4px] text-black">
        <span>Фотографии — Снимок2.PNG</span>
        <svg width="120" height="16" viewBox="0 0 120 16" fill="none" stroke="#c3c3c3">
          <path d="M0 8.500h10M46.500 6.500h7v7h-7zM48.500 6V3.500h7v7H54M92.500 3.500l9 9M101.500 3.500l-9 9" />
        </svg>
      </div>
      <div className="flex h-12 items-center bg-[#0078d7] pl-3">
        <svg width="20" height="20" viewBox="0 0 20 20">
          <path d="M.7.700h18.600v18.600H.7z" fill="none" stroke="#fff" strokeWidth="1.400" />
          <path d="M1 13l6-7 5 6 4-4 4 5v6H1z" fill="#fff" />
        </svg>
      </div>
      <div className="absolute top-[20px] left-[27px] flex h-[833px] w-[1414px] flex-col border border-[#a0a0a0] bg-white shadow-[0_3px_14px_rgba(0,0,0,0.35)]">
        <TabStrip />
        <AddressBar />
        <Bookmarks />
        <FigmaToolbar />
        <div className="flex h-[672px] overflow-hidden">
          <LayersPanel />
          <Canvas />
          <InspectPanel />
        </div>
      </div>
      <Taskbar />
    </div>
  );
}
